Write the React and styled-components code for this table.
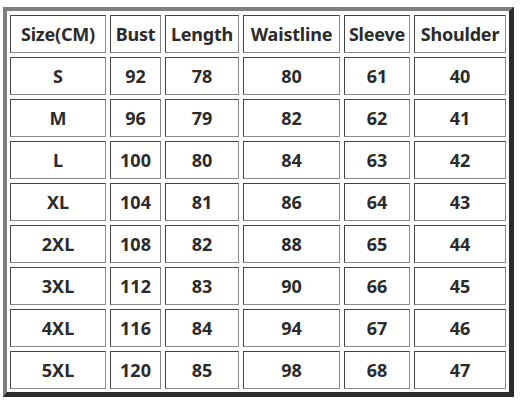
import React from "react";
import styled, { createGlobalStyle } from "styled-components";

const Global = createGlobalStyle`
  html, body { margin: 0; padding: 0; background: #ffffff; }
  body { font-family: "Noto Sans", "Open Sans", sans-serif; }
`;

const Page = styled.div`
  padding: 7px 0 0 3px;
`;

const Frame = styled.div`
  display: inline-block;
  border-style: solid;
  border-width: 4px 5px 5px 4px;
  border-color: #7f7f7f #2b2b2b #2b2b2b #7f7f7f;
  padding: 4px 3px 3px 3px;
  background: #ffffff;
`;

const Grid = styled.div`
  display: grid;
  grid-template-columns: 96px 51px 74px 97px 66px 92px;
  grid-auto-rows: 38px;
  gap: 4px;
`;

const Cell = styled.div`
  box-sizing: border-box;
  display: flex;
  align-items: center;
  justify-content: center;
  border: 1px solid;
  border-color: #444444 #8a8a8a #8a8a8a #444444;
  font-weight: 700;
  font-size: 18px;
  color: #2b2b2b;
  white-space: nowrap;
  letter-spacing: ${(p) => (p.$tight ? "-0.2px" : "0")};
`;

const header = ["Size(CM)", "Bust", "Length", "Waistline", "Sleeve", "Shoulder"];
const rows = [
  ["S", 92, 78, 80, 61, 40],
  ["M", 96, 79, 82, 62, 41],
  ["L", 100, 80, 84, 63, 42],
  ["XL", 104, 81, 86, 64, 43],
  ["2XL", 108, 82, 88, 65, 44],
  ["3XL", 112, 83, 90, 66, 45],
  ["4XL", 116, 84, 94, 67, 46],
  ["5XL", 120, 85, 98, 68, 47],
];

export default function App() {
  return (
    <Page>
      <Global />
      <Frame>
        <Grid>
          {header.map((h) => (
            <Cell key={h} $tight>
              {h}
            </Cell>
          ))}
          {rows.map((r) =>
            r.map((v, i) => <Cell key={r[0] + "-" + i}>{v}</Cell>)
          )}
        </Grid>
      </Frame>
    </Page>
  );
}
